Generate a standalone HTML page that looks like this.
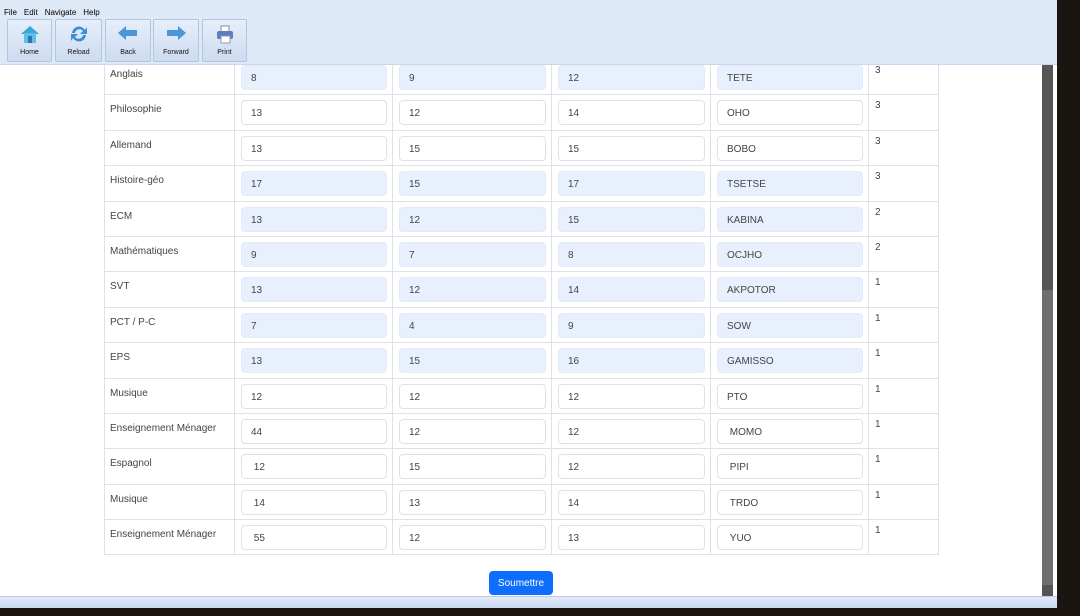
<!DOCTYPE html>
<html><head><meta charset="utf-8"><style>
*{box-sizing:border-box;margin:0;padding:0}
body{width:1080px;height:616px;overflow:hidden;background:#1b1512;font-family:"Liberation Sans",sans-serif;position:relative}
#win{position:absolute;left:0;top:0;width:1057px;height:608px;background:#fff;overflow:hidden}
#tb{position:absolute;left:0;top:0;width:1057px;height:65px;background:#dee9f8;border-bottom:1px solid #c9d8ee;z-index:2}
#menu{position:absolute;top:8px;left:4px;font-size:8px;color:#000}
#menu span{margin-right:7px}
.btn{position:absolute;top:19px;height:43px;border:1px solid #b3c6e0;border-radius:2px;background:linear-gradient(#e6eefa,#cddcf0);font-size:7px;text-align:center;color:#111}
.btn svg{position:absolute;left:50%;top:4px;transform:translateX(-50%)}
.btn b{font-weight:normal;position:absolute;bottom:5px;left:0;right:0}
table{position:absolute;left:104px;top:59px;border-collapse:collapse;font-size:10px;color:#444}
tr{height:35.4px}
td{border:1px solid #dee2e6;vertical-align:top;padding:0}
td.l{width:130px;padding:9px 5px 0}
td.n{width:70px;padding:5px 6px 0}
td.c{padding:5px 5px 0 6px}
.i{height:25px;border:1px solid #dee2e6;border-radius:4px;background:#fff;padding:7px 9px 0;font-size:10px;color:#444}
tr.a .i{background:#e8f0fe;border-color:#e3eaf6}
#sub{position:absolute;left:489px;top:571px;width:64px;height:24px;background:#0d6efd;color:#fff;border-radius:4px;font-size:10px;display:flex;align-items:center;justify-content:center;padding-top:1px}
#sb{position:absolute;left:1042px;top:65px;width:11px;height:531px;background:#555}
#sb i{position:absolute;left:0;top:225px;width:11px;height:295px;background:#6e6e6e}
#st{position:absolute;left:0;top:596px;width:1057px;height:12px;background:linear-gradient(#e2ebf7,#c8d8ef);border-top:1px solid #b7cae6}
</style></head><body>
<div id="win">
<div id="tb">
<div id="menu"><span>File</span><span>Edit</span><span>Navigate</span><span>Help</span></div>
<div class="btn" style="left:7px;width:45px"><svg width="22" height="20" viewBox="0 0 22 20"><path d="M2 10L11 2L20 10Z" fill="#3aa7d8"/><rect x="5" y="9" width="12" height="10" fill="#5fbde6"/><rect x="9" y="12" width="4" height="7" fill="#2878b0"/></svg><b>Home</b></div>
<div class="btn" style="left:55px;width:47px"><svg width="20" height="20" viewBox="0 0 20 20"><path d="M3 9A7 7 0 0 1 16 6L18 3V10H11L14 7A4.5 4.5 0 0 0 6 9Z" fill="#3a8fd0"/><path d="M17 11A7 7 0 0 1 4 14L2 17V10H9L6 13A4.5 4.5 0 0 0 14 11Z" fill="#3a8fd0"/></svg><b>Reload</b></div>
<div class="btn" style="left:105px;width:46px"><svg width="22" height="18" viewBox="0 0 22 18"><path d="M1 9L9 2V6H20V12H9V16Z" fill="#4a96d6"/></svg><b>Back</b></div>
<div class="btn" style="left:153px;width:46px"><svg width="22" height="18" viewBox="0 0 22 18"><path d="M21 9L13 2V6H2V12H13V16Z" fill="#4a96d6"/></svg><b>Forward</b></div>
<div class="btn" style="left:202px;width:45px"><svg width="20" height="20" viewBox="0 0 20 20"><rect x="6" y="2" width="8" height="6" fill="#fff" stroke="#889"/><rect x="2" y="7" width="16" height="8" rx="2" fill="#5c7fc0"/><rect x="6" y="12" width="9" height="7" fill="#fff" stroke="#99a"/></svg><b>Print</b></div>
</div>
<table>
<tr class="a"><td class="l">Anglais</td><td class="c" style="width:158px"><div class="i">8</div></td><td class="c" style="width:159px"><div class="i">9</div></td><td class="c" style="width:159px"><div class="i">12</div></td><td class="c" style="width:158px"><div class="i">TETE</div></td><td class="n">3</td></tr>
<tr><td class="l">Philosophie</td><td class="c"><div class="i">13</div></td><td class="c"><div class="i">12</div></td><td class="c"><div class="i">14</div></td><td class="c"><div class="i">OHO</div></td><td class="n">3</td></tr>
<tr><td class="l">Allemand</td><td class="c"><div class="i">13</div></td><td class="c"><div class="i">15</div></td><td class="c"><div class="i">15</div></td><td class="c"><div class="i">BOBO</div></td><td class="n">3</td></tr>
<tr class="a"><td class="l">Histoire-géo</td><td class="c"><div class="i">17</div></td><td class="c"><div class="i">15</div></td><td class="c"><div class="i">17</div></td><td class="c"><div class="i">TSETSE</div></td><td class="n">3</td></tr>
<tr class="a"><td class="l">ECM</td><td class="c"><div class="i">13</div></td><td class="c"><div class="i">12</div></td><td class="c"><div class="i">15</div></td><td class="c"><div class="i">KABINA</div></td><td class="n">2</td></tr>
<tr class="a"><td class="l">Mathématiques</td><td class="c"><div class="i">9</div></td><td class="c"><div class="i">7</div></td><td class="c"><div class="i">8</div></td><td class="c"><div class="i">OCJHO</div></td><td class="n">2</td></tr>
<tr class="a"><td class="l">SVT</td><td class="c"><div class="i">13</div></td><td class="c"><div class="i">12</div></td><td class="c"><div class="i">14</div></td><td class="c"><div class="i">AKPOTOR</div></td><td class="n">1</td></tr>
<tr class="a"><td class="l">PCT / P-C</td><td class="c"><div class="i">7</div></td><td class="c"><div class="i">4</div></td><td class="c"><div class="i">9</div></td><td class="c"><div class="i">SOW</div></td><td class="n">1</td></tr>
<tr class="a"><td class="l">EPS</td><td class="c"><div class="i">13</div></td><td class="c"><div class="i">15</div></td><td class="c"><div class="i">16</div></td><td class="c"><div class="i">GAMISSO</div></td><td class="n">1</td></tr>
<tr><td class="l">Musique</td><td class="c"><div class="i">12</div></td><td class="c"><div class="i">12</div></td><td class="c"><div class="i">12</div></td><td class="c"><div class="i">PTO</div></td><td class="n">1</td></tr>
<tr><td class="l">Enseignement Ménager</td><td class="c"><div class="i">44</div></td><td class="c"><div class="i">12</div></td><td class="c"><div class="i">12</div></td><td class="c"><div class="i">&nbsp;MOMO</div></td><td class="n">1</td></tr>
<tr><td class="l">Espagnol</td><td class="c"><div class="i">&nbsp;12</div></td><td class="c"><div class="i">15</div></td><td class="c"><div class="i">12</div></td><td class="c"><div class="i">&nbsp;PIPI</div></td><td class="n">1</td></tr>
<tr><td class="l">Musique</td><td class="c"><div class="i">&nbsp;14</div></td><td class="c"><div class="i">13</div></td><td class="c"><div class="i">14</div></td><td class="c"><div class="i">&nbsp;TRDO</div></td><td class="n">1</td></tr>
<tr><td class="l">Enseignement Ménager</td><td class="c"><div class="i">&nbsp;55</div></td><td class="c"><div class="i">12</div></td><td class="c"><div class="i">13</div></td><td class="c"><div class="i">&nbsp;YUO</div></td><td class="n">1</td></tr>
</table>
<div id="sub">Soumettre</div>
<div id="sb"><i></i></div>
<div id="st"></div>
</div>
</body></html>
